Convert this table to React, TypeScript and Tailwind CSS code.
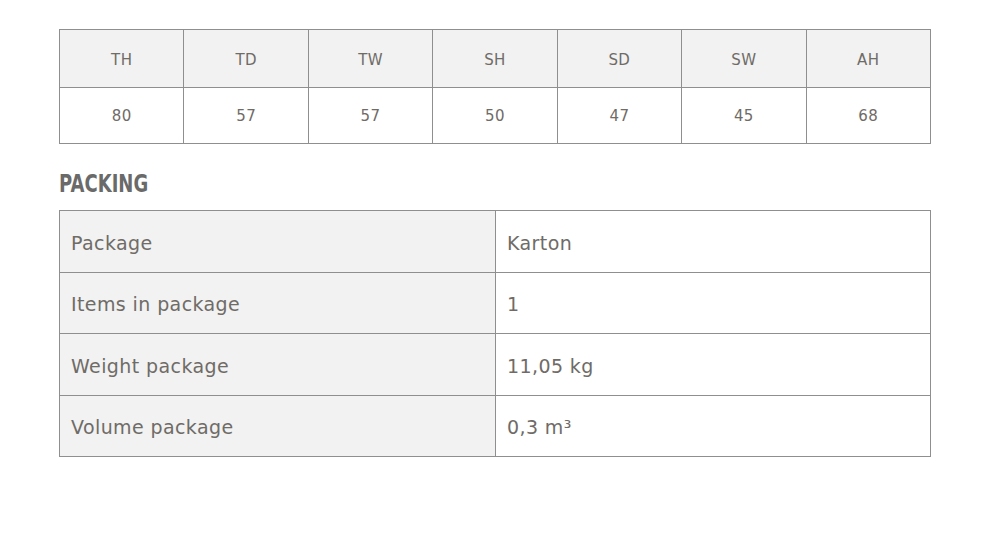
import React from 'react';

const sizes = [
  { label: 'TH', value: '80' },
  { label: 'TD', value: '57' },
  { label: 'TW', value: '57' },
  { label: 'SH', value: '50' },
  { label: 'SD', value: '47' },
  { label: 'SW', value: '45' },
  { label: 'AH', value: '68' },
];

const packing = [
  { label: 'Package', value: 'Karton' },
  { label: 'Items in package', value: '1' },
  { label: 'Weight package', value: '11,05 kg' },
  { label: 'Volume package', value: '0,3 m³' },
];

export default function App() {
  return (
    <div className="w-[989px] h-[544px] bg-white pt-[29px] px-[59px] text-[#6f6b67]" style={{ fontFamily: '"DejaVu Sans", "Open Sans", sans-serif' }}>
      {/* dimensions table */}
      <table className="w-[872px] border-collapse table-fixed border border-[#8f8f8f]">
        <thead>
          <tr className="h-[58px] bg-[#f1f2f1]">
            {sizes.map((s) => (
              <th key={s.label} className="border border-[#8f8f8f] pt-[4px] text-[15px] tracking-[0.4px] font-normal text-center">{s.label}</th>
            ))}
          </tr>
        </thead>
        <tbody>
          <tr className="h-[56px]">
            {sizes.map((s) => (
              <td key={s.label} className="border border-[#8f8f8f] pt-[2px] text-[15px] tracking-[0.4px] text-center">{s.value}</td>
            ))}
          </tr>
        </tbody>
      </table>

      <h2 className="mt-[27px] mb-[13px] text-[25px] leading-[26px] font-bold text-[#6a6a6a]">
        <span className="inline-block origin-left scale-x-[0.72]">PACKING</span>
      </h2>

      {/* packing table */}
      <table className="w-[872px] border-collapse table-fixed border border-[#8f8f8f]">
        <tbody>
          {packing.map((row) => (
            <tr key={row.label} className="h-[61.5px]">
              <td className="w-[436px] bg-[#f1f2f1] border border-[#8f8f8f] px-[11px] pt-[3px] text-[19px] tracking-[0.4px]">{row.label}</td>
              <td className="border border-[#8f8f8f] px-[11px] pt-[3px] text-[19px] tracking-[0.4px]">{row.value}</td>
            </tr>
          ))}
        </tbody>
      </table>
    </div>
  );
}
